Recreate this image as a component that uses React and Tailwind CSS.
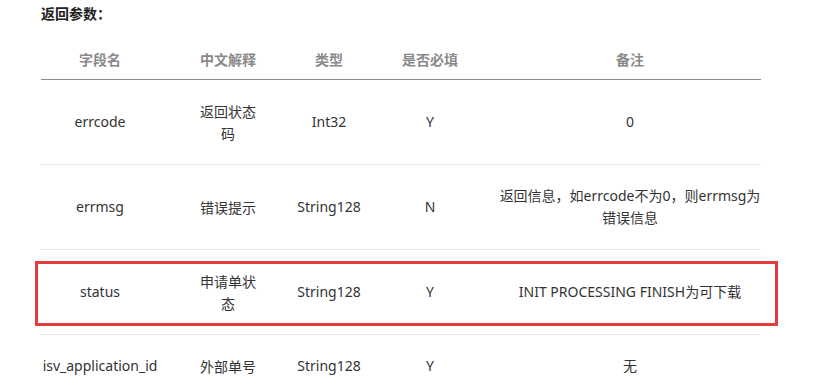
const rows = [
  { name: 'errcode', cn: '返回状态码', type: 'Int32', req: 'Y', note: '0' },
  { name: 'errmsg', cn: '错误提示', type: 'String128', req: 'N', note: '返回信息，如errcode不为0，则errmsg为错误信息' },
  { name: 'status', cn: '申请单状态', type: 'String128', req: 'Y', note: 'INIT PROCESSING FINISH为可下载', marked: true },
  { name: 'isv_application_id', cn: '外部单号', type: 'String128', req: 'Y', note: '无' },
];

const cols = 'grid grid-cols-[118px_138px_64px_138px_262px]';
const latin = "font-['Noto_Sans','Noto_Sans_CJK_SC',sans-serif]";

export default function App() {
  return (
    <div className="h-[390px] w-[819px] overflow-hidden bg-white pl-[41px] font-['Noto_Sans_CJK_SC','Noto_Sans',sans-serif] text-[14px] text-[#333]">
      <p className="pt-[2px] font-bold leading-[22px] text-[#222]">返回参数：</p>

      <div className="w-[720px]">
        <div className={`${cols} h-[56px] items-end border-b border-[#8c8c8c] pb-[9px] text-center font-bold leading-[22px] text-[#8a8a8a]`}>
          <span>字段名</span>
          <span>中文解释</span>
          <span>类型</span>
          <span>是否必填</span>
          <span>备注</span>
        </div>

        {rows.map((r) => (
          <div
            key={r.name}
            className={`${cols} relative items-center border-b border-[#e6e6e6] py-[20px] text-center leading-[22px]`}
          >
            <span className={latin}>{r.name}</span>
            <span className="mx-auto w-[60px]">{r.cn}</span>
            <span className={latin}>{r.type}</span>
            <span className={latin}>{r.req}</span>
            <span className={`-mx-[4px] ${latin}`}>{r.note}</span>
            {r.marked && (
              <div className="absolute left-[-6px] top-[11px] h-[65px] w-[743px] border-[3px] border-[#e43c3c]" />
            )}
          </div>
        ))}
      </div>
    </div>
  );
}
